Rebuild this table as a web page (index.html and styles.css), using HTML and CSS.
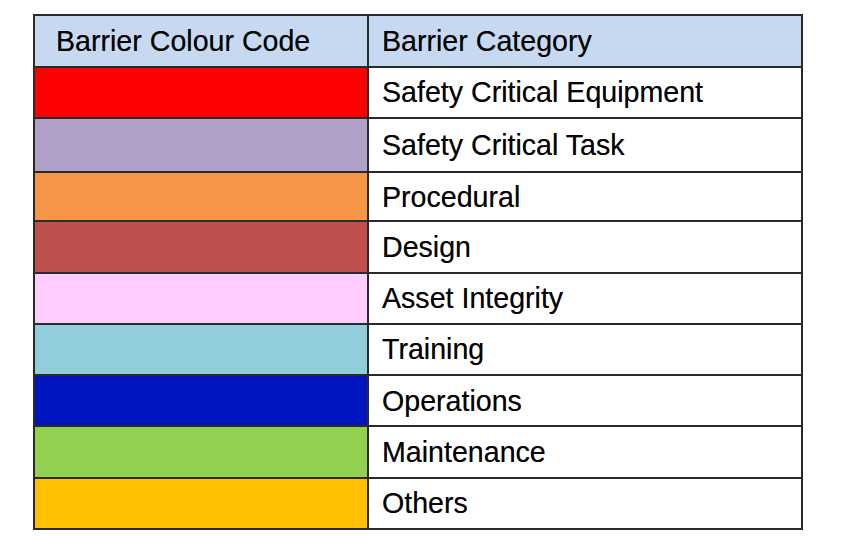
FILE: index.html
```html
<!DOCTYPE html>
<html>
<head>
<meta charset="utf-8">
<link rel="stylesheet" href="styles.css">
</head>
<body>
<table class="legend">
  <thead>
    <tr><th class="code-head">Barrier Colour Code</th><th class="cat-head">Barrier Category</th></tr>
  </thead>
  <tbody>
    <tr><td class="swatch c-red"></td><td class="cat">Safety Critical Equipment</td></tr>
    <tr class="tall"><td class="swatch c-lavender"></td><td class="cat">Safety Critical Task</td></tr>
    <tr class="short"><td class="swatch c-orange"></td><td class="cat">Procedural</td></tr>
    <tr><td class="swatch c-brick"></td><td class="cat">Design</td></tr>
    <tr><td class="swatch c-pink"></td><td class="cat">Asset Integrity</td></tr>
    <tr><td class="swatch c-sky"></td><td class="cat">Training</td></tr>
    <tr><td class="swatch c-blue"></td><td class="cat">Operations</td></tr>
    <tr><td class="swatch c-green"></td><td class="cat">Maintenance</td></tr>
    <tr><td class="swatch c-gold"></td><td class="cat">Others</td></tr>
  </tbody>
</table>
</body>
</html>
```

FILE: styles.css
```css
html, body {
  margin: 0;
  padding: 0;
  background: #ffffff;
}

body {
  padding: 14px 0 0 33px;
  font-family: "Liberation Sans", Arial, sans-serif;
  color: #050505;
}

.legend {
  border-collapse: collapse;
  width: 770px;
  table-layout: fixed;
  font-size: 28.6px;
}

.legend th,
.legend td {
  border: 2px solid #2a2a2a;
  height: 51.3px;
  padding: 0 0 0 13px;
  box-sizing: border-box;
  vertical-align: middle;
  text-align: left;
  font-weight: normal;
  line-height: 1;
  text-shadow: 0 0 0.4px rgba(0, 0, 0, 0.6);
}

.legend th {
  background: #c6d9f1;
  height: 52px;
}

.legend .code-head {
  width: 334px;
  padding-left: 21px;
}

.legend tr.tall td { height: 54px; }
.legend tr.short td { height: 49px; }

.cat { background: #ffffff; }

.c-red { background: #ff0000; }
.c-lavender { background: #b1a0c7; }
.c-orange { background: #f79646; }
.c-brick { background: #c0504d; }
.c-pink { background: #ffccff; }
.c-sky { background: #92cddc; }
.c-blue { background: #0016c0; }
.c-green { background: #92d050; }
.c-gold { background: #ffc000; }
```
